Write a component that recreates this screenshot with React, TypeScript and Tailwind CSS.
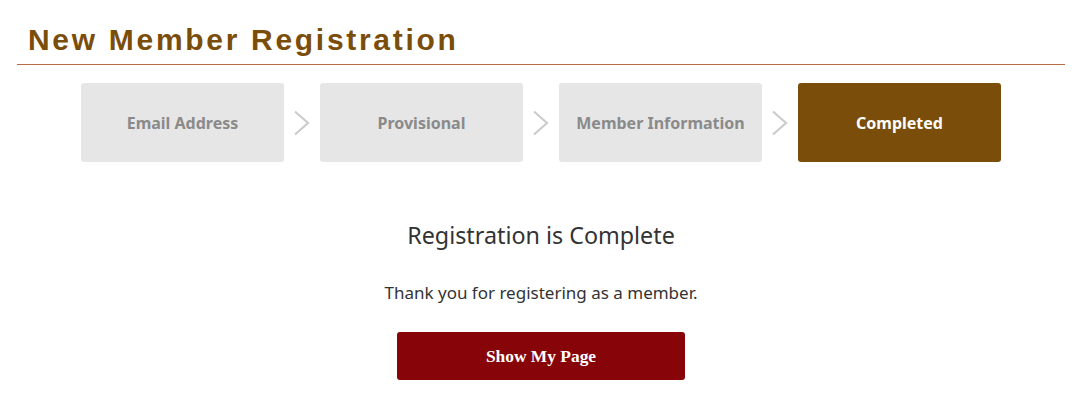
const steps = ['Email Address', 'Provisional', 'Member Information', 'Completed'];

function Chevron() {
  return (
    <svg width="36" height="26" viewBox="0 0 36 26" fill="none" className="shrink-0">
      <path d="M11 1.5 L24 13 L11 24.5" stroke="#cccccc" strokeWidth="2.2" />
    </svg>
  );
}

export default function App() {
  return (
    <div className="min-h-[405px] bg-white pl-[17px] pr-[26px] pt-[22px] font-['Noto_Sans','DejaVu_Sans',sans-serif]">
      <h1 className="border-b border-[#b86b45] pb-[6px] pl-[11px] font-['Liberation_Sans',sans-serif] text-[30px] font-bold leading-[36px] tracking-[2.7px] text-[#7a4e0a]">
        New Member Registration
      </h1>

      <div className="mt-[18px] flex items-center justify-center">
        {steps.map((s, i) => {
          const done = i === steps.length - 1;
          return (
            <div key={s} className="flex items-center">
              {i > 0 && <Chevron />}
              <div
                className={`flex h-[79px] w-[203px] items-center justify-center rounded-[3px] text-[16px] font-bold ${
                  done ? 'bg-[#7a4e0a] text-white' : 'bg-[#e6e6e6] text-[#8a8a8a]'
                }`}
              >
                {s}
              </div>
            </div>
          );
        })}
      </div>

      <div className="flex flex-col items-center">
        <h2 className="mt-[58px] text-[23.3px] leading-[30px] text-[#333]">Registration is Complete</h2>
        <p className="mt-[32px] text-[17px] leading-[22px] text-[#333]">Thank you for registering as a member.</p>
        <button className="mt-[28px] flex h-[48px] w-[288px] items-center justify-center rounded-[3px] bg-[#870508] font-['Liberation_Serif',serif] text-[17.4px] font-bold text-white">
          Show My Page
        </button>
      </div>
    </div>
  );
}
